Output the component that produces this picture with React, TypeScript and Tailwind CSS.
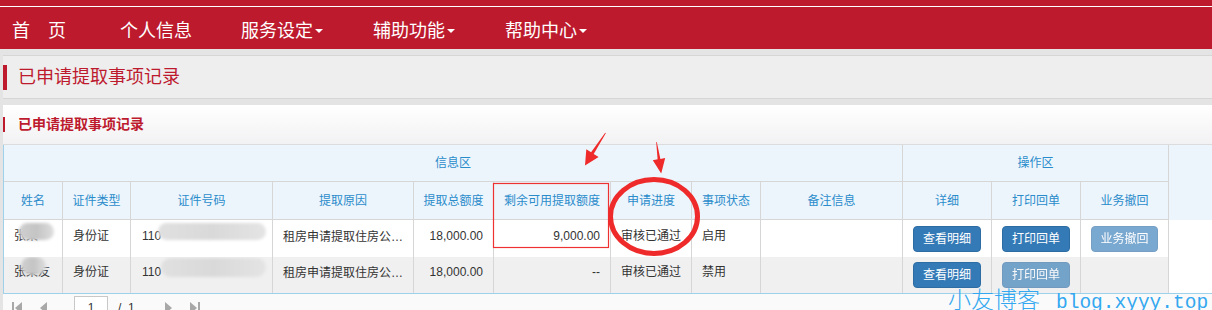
const cols =
  'grid grid-cols-[59px_68px_142px_141px_80px_117px_81px_69px_142px_89px_89px_88px] w-[1165px]';

const headers = [
  '姓名',
  '证件类型',
  '证件号码',
  '提取原因',
  '提取总额度',
  '剩余可用提取额度',
  '申请进度',
  '事项状态',
  '备注信息',
  '详细',
  '打印回单',
  '业务撤回',
];

interface Row {
  tail: string;
  rest: string;
  status: string;
  canPrint: boolean;
  canRevoke: boolean | null;
  bg: string;
  h: string;
}

const rows: Row[] = [
  { tail: '', rest: '9,000.00', status: '启用', canPrint: true, canRevoke: false, bg: 'bg-white', h: 'h-[37px]' },
  { tail: '友', rest: '--', status: '禁用', canPrint: false, canRevoke: null, bg: 'bg-[#f0f0f0]', h: 'h-[36px]' },
];

function Caret() {
  return (
    <span className="ml-[2px] inline-block h-0 w-0 border-x-[4px] border-t-[4px] border-x-transparent border-t-white" />
  );
}

function Btn({ label, enabled }: { label: string; enabled: boolean }) {
  return (
    <span
      className={`inline-flex h-[26px] w-[68px] items-center justify-center rounded-[4px] border border-[#2e6da4] bg-[#337ab7] text-[12px] text-white ${
        enabled ? '' : 'opacity-[0.65]'
      }`}
    >
      {label}
    </span>
  );
}

// text cells sit a few px above the row centre, buttons are centred
function Cell({ children, className = '' }: { children?: React.ReactNode; className?: string }) {
  return (
    <div className={`relative flex items-center overflow-hidden border-r border-[#d6d6d6] px-[10px] ${className}`}>
      {children}
    </div>
  );
}

function Annotations() {
  return (
    <svg className="pointer-events-none absolute left-0 top-0" width="1212" height="310" viewBox="0 0 1212 310">
      <rect x="493.5" y="183.5" width="115" height="64" fill="none" stroke="#ee3232" strokeWidth="1.2" />
      <ellipse cx="654" cy="216.5" rx="43.5" ry="37" fill="none" stroke="#ef2a2a" strokeWidth="5" />
      <polygon
        points="605.2,132.8 605.8,133.2 593.7,153.9 598.6,156.9 585,165.5 586.3,149.2 591.1,152.3"
        fill="#ef2a2a"
      />
      <polygon
        points="656.2,142 656.8,142 660.4,158.9 665.2,158 661.2,173.5 652.8,160.2 657.6,159.3"
        fill="#ef2a2a"
      />
    </svg>
  );
}

export default function App() {
  return (
    <div className="relative h-[310px] w-[1212px] overflow-hidden bg-[#e4e4e4] font-['Liberation_Sans','Noto_Sans_CJK_SC',sans-serif]">
      {/* Top nav */}
      <div className="h-[6px] bg-[#bd1a2e]" />
      <div className="h-px bg-white" />
      <nav className="flex h-[42px] items-center bg-[#bd1a2e] pt-[6px] text-[18px] leading-none text-white">
        <span className="ml-[12px]">首　页</span>
        <span className="ml-[54px]">个人信息</span>
        <span className="ml-[49px] flex items-center">
          服务设定
          <Caret />
        </span>
        <span className="ml-[50px] flex items-center">
          辅助功能
          <Caret />
        </span>
        <span className="ml-[50px] flex items-center">
          帮助中心
          <Caret />
        </span>
      </nav>

      {/* Page title */}
      <div className="ml-[3px] mt-[6px] flex h-[44px] items-center border-y border-[#d6d6d6] bg-[#eeeeee]">
        <span className="h-[25px] w-[4px] bg-[#bd1a2e]" />
        <span className="ml-[11px] text-[18px] text-[#bd1a2e]">已申请提取事项记录</span>
      </div>

      {/* Panel */}
      <div className="ml-[3px] mt-[6px] bg-white">
        <div className="flex h-[40px] items-center border-b border-[#dcdcdc] bg-linear-to-b from-white to-[#f2f2f4]">
          <span className="h-[15px] w-[2px] bg-[#bd1a2e]" />
          <span className="ml-[13px] text-[14px] font-bold text-[#bd1a2e]">已申请提取事项记录</span>
        </div>

        <div className="border-b border-l border-[#9fd2ea]">
          {/* Header */}
          <div className="bg-[#edf5fc] text-[12px] text-[#2a8ccb]">
            <div className={cols}>
              <div className="col-span-9 flex h-[37px] items-center justify-center border-b border-r border-[#d6d6d6]">
                信息区
              </div>
              <div className="col-span-3 flex h-[37px] items-center justify-center border-b border-r border-[#d6d6d6]">
                操作区
              </div>
              {headers.map((h) => (
                <div
                  key={h}
                  className="flex h-[38px] items-center justify-center border-b border-r border-[#d6d6d6] whitespace-nowrap"
                >
                  {h}
                </div>
              ))}
            </div>
          </div>

          {/* Body */}
          <div className="text-[12px] text-[#333]">
            {rows.map((r, i) => (
              <div key={i} className={`${cols} ${r.bg}`}>
                <Cell className={`${r.h} pb-[6px]`}>
                  <span className="whitespace-nowrap">张某{r.tail}</span>
                  <span
                    className={`absolute rounded-full bg-linear-to-r from-[#d0d0d0] via-[#c4c4c4] to-[#dedede] blur-[1.5px] ${
                      i === 0 ? 'left-[15px] top-[3px] h-[17px] w-[35px]' : 'left-[17px] top-[0px] h-[18px] w-[25px]'
                    }`}
                  />
                </Cell>
                <Cell className={`${r.h} pb-[6px]`}>身份证</Cell>
                <Cell className={`${r.h} pb-[6px] pl-[11px]`}>
                  <span>110</span>
                  <span
                    className={`absolute rounded-full bg-linear-to-r from-[#e0e0e0] via-[#d9d9d9] to-[#e4e4e4] blur-[1.5px] ${
                      i === 0 ? 'left-[27px] top-[3px] h-[17px] w-[108px]' : 'left-[30px] top-[1px] h-[19px] w-[105px]'
                    }`}
                  />
                </Cell>
                <Cell className={`${r.h} pb-[4px] pr-[2px]`}>
                  <span className="truncate">租房申请提取住房公积金</span>
                </Cell>
                <Cell className={`${r.h} justify-end pb-[6px]`}>18,000.00</Cell>
                <Cell className={`${r.h} justify-end pb-[6px]`}>{r.rest}</Cell>
                <Cell className={`${r.h} justify-center pb-[6px]`}>审核已通过</Cell>
                <Cell className={`${r.h} pb-[6px]`}>{r.status}</Cell>
                <Cell className={r.h} />
                <Cell className={`${r.h} justify-center`}>
                  <Btn label="查看明细" enabled />
                </Cell>
                <Cell className={`${r.h} justify-center`}>
                  <Btn label="打印回单" enabled={r.canPrint} />
                </Cell>
                <Cell className={`${r.h} justify-center`}>
                  {r.canRevoke !== null && <Btn label="业务撤回" enabled={r.canRevoke} />}
                </Cell>
              </div>
            ))}
          </div>
        </div>

        {/* Pagination */}
        <div className="flex h-[28px] items-center bg-[#fafafa] text-[12px] text-[#333]">
          <svg className="ml-[9px]" width="10" height="12" viewBox="0 0 10 12">
            <rect x="0" y="0" width="2" height="12" fill="#a8a8a8" />
            <polygon points="10,0 10,12 3,6" fill="#a8a8a8" />
          </svg>
          <svg className="ml-[18px]" width="7" height="12" viewBox="0 0 7 12">
            <polygon points="7,0 7,12 0,6" fill="#a8a8a8" />
          </svg>
          <span className="ml-[27px] flex h-[24px] w-[34px] items-center justify-center border border-[#c8c8c8] bg-white">
            1
          </span>
          <span className="ml-[10px] whitespace-pre">/  1</span>
          <svg className="ml-[30px]" width="7" height="12" viewBox="0 0 7 12">
            <polygon points="0,0 0,12 7,6" fill="#a8a8a8" />
          </svg>
          <svg className="ml-[18px]" width="10" height="12" viewBox="0 0 10 12">
            <polygon points="0,0 0,12 7,6" fill="#a8a8a8" />
            <rect x="8" y="0" width="2" height="12" fill="#a8a8a8" />
          </svg>
        </div>
      </div>

      <Annotations />

      {/* Watermark */}
      <div className="pointer-events-none absolute left-[948px] top-[287px] flex items-baseline whitespace-nowrap leading-none text-[#33a8f0]">
        <span className="font-['Noto_Sans_CJK_SC',sans-serif] text-[23px] font-light">小友博客</span>
        <span className="ml-[16px] font-['Liberation_Mono',monospace] text-[19.5px]">blog.xyyy.top</span>
      </div>
    </div>
  );
}
